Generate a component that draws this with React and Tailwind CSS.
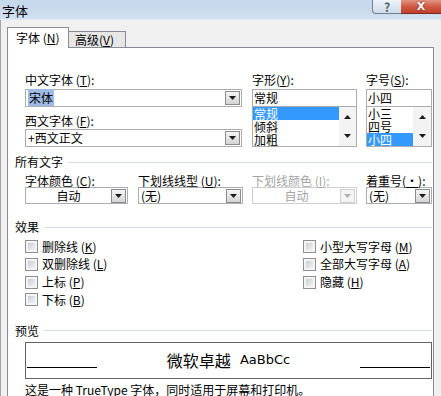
import React from 'react'

function M({ c }) {
  return (
    <>
      (<span className="underline underline-offset-1">{c}</span>)
    </>
  )
}

function Tri({ up, disabled }) {
  return (
    <svg width="7" height="4" viewBox="0 0 7 4">
      <path d={up ? 'M0 4 L3.5 0 L7 4 Z' : 'M0 0 L7 0 L3.5 4 Z'} fill={disabled ? '#b0b0b0' : '#1a1a1a'} />
    </svg>
  )
}

function Arrow({ disabled }) {
  return (
    <div
      className={`mr-px flex h-[14px] w-[15px] items-center justify-center border ${
        disabled ? 'border-[#d0d0d0] bg-[#f4f4f4]' : 'border-[#8b8b8b] bg-linear-to-b from-[#f6f6f6] to-[#d4d4d4]'
      }`}
    >
      <Tri disabled={disabled} />
    </div>
  )
}

function Combo({ className, children, center, disabled }) {
  return (
    <div
      className={`flex h-[17px] items-center border bg-white ${
        disabled ? 'border-[#cfcfcf] text-[#a3a3a3]' : 'border-[#abadb3]'
      } ${className}`}
    >
      <div className={`flex-1 whitespace-nowrap ${center ? 'text-center' : 'pl-[2px]'}`}>{children}</div>
      <Arrow disabled={disabled} />
    </div>
  )
}

function ListBox({ items, selected, sbw }) {
  return (
    <div className="flex h-[40px] border border-t-0 border-[#abadb3] bg-white">
      <div className="flex flex-1 flex-col leading-[13px]">
        {items.map((it) => (
          <div key={it} className={`h-[13px] pl-px ${it === selected ? 'bg-[#3399ff] text-white' : ''}`}>
            {it}
          </div>
        ))}
      </div>
      <div className={`flex flex-col bg-[#f3f3f3] ${sbw}`}>
        <div className="flex flex-1 items-center justify-center">
          <Tri up />
        </div>
        <div className="flex flex-1 items-center justify-center">
          <Tri />
        </div>
      </div>
    </div>
  )
}

function Check({ children }) {
  return (
    <div className="flex h-[17.67px] items-center">
      <span className="flex h-[13px] w-[13px] border border-[#8e8f8f] bg-[#f4f4f4] p-[2px]">
        <span className="flex-1 bg-linear-to-br from-[#c9ced4] to-[#f2f3f4]" />
      </span>
      <span className="ml-[4px]">{children}</span>
    </div>
  )
}

function Section({ children }) {
  return (
    <div className="-ml-[10px] flex h-[14px] items-center leading-[14px]">
      <span>{children}</span>
      <div className="ml-[5px] h-px flex-1 bg-[#d5dde5]" />
    </div>
  )
}

export default function App() {
  return (
    <div className="flex h-[396px] w-[441px] flex-col overflow-hidden bg-[#f0f0f0] font-['Noto_Sans_CJK_SC',sans-serif] text-[12px] leading-[14px] text-black">
      <div className="h-[2px] bg-[#262626]" />
      <div className="flex h-[24px] items-start justify-between border-b border-[#dfe7f0] bg-linear-to-b from-[#c6d8ec] via-[#c9daed] to-[#d3e1f0]">
        <span className="ml-[2px] mt-[3px] text-[13px] leading-[16px]">字体</span>
        <div className="flex">
          <div className="flex h-[14px] w-[29px] items-center justify-center rounded-bl-[4px] border-b border-l border-[#6f8196] bg-linear-to-b from-[#eef3f8] to-[#cfdbe8] text-[12px] font-bold leading-[14px] text-[#4f5f72]">
            ?
          </div>
          <div className="flex h-[14px] w-[40px] items-center justify-center border-b border-[#7a2a20] bg-linear-to-b from-[#e39484] via-[#cf5a45] to-[#c0402c] font-['DejaVu_Sans',sans-serif] text-[11px] font-bold leading-[14px] text-white [text-shadow:0_0_2px_#5a1a10]">
            X
          </div>
        </div>
      </div>

      <div className="flex flex-1 flex-col border-l border-[#a3a3a3] pl-[6px] pt-[6px]">
        <div className="flex h-[21px] items-end">
          <div className="relative z-10 -mb-px flex h-[21px] w-[62px] items-center border border-b-0 border-[#898c95] bg-white pl-[8px]">
            字体 <M c="N" />
          </div>
          <div className="flex h-[16px] w-[57px] items-center border border-b-0 border-l-0 border-[#898c95] bg-[#e6e6e6] pl-[6px]">
            高级<M c="V" />
          </div>
        </div>

        <div className="flex w-[427px] flex-1 flex-col border border-b-0 border-[#898c95] bg-white pl-[17px] pr-px pt-[25px]">
          <div className="flex">
            <div className="flex w-[217px] flex-col">
              <div className="h-[16px]">
                中文字体 <M c="T" />:
              </div>
              <Combo className="h-[18px]">
                <span className="bg-[#9dbbe4] px-px">宋体</span>
              </Combo>
              <div className="flex h-[22px] items-end pb-px">
                西文字体 <M c="F" />:
              </div>
              <Combo className="h-[18px]">+西文正文</Combo>
            </div>
            <div className="ml-[10px] flex w-[105px] flex-col">
              <div className="h-[16px]">
                字形<M c="Y" />:
              </div>
              <div className="flex h-[18px] items-center border border-[#abadb3] pl-px">常规</div>
              <ListBox items={['常规', '倾斜', '加粗']} selected="常规" sbw="w-[17px]" />
            </div>
            <div className="ml-[9px] flex w-[66px] flex-col">
              <div className="h-[16px]">
                字号<M c="S" />:
              </div>
              <div className="flex h-[18px] items-center border border-[#abadb3] pl-px">小四</div>
              <ListBox items={['小三', '四号', '小四']} selected="小四" sbw="w-[18px]" />
            </div>
          </div>

          <div className="mt-[8px]">
            <Section>所有文字</Section>
          </div>
          <div className="mt-[5px] flex">
            <div className="w-[103px]">
              <div className="h-[13px] leading-[13px]">
                字体颜色 <M c="C" />:
              </div>
              <Combo center>自动</Combo>
            </div>
            <div className="ml-[10px] w-[105px]">
              <div className="h-[13px] whitespace-nowrap leading-[13px]">
                下划线线型 <M c="U" />:
              </div>
              <Combo>(无)</Combo>
            </div>
            <div className="ml-[9px] w-[105px]">
              <div className="h-[13px] leading-[13px] text-[#a3a3a3]">
                下划线颜色 <M c="I" />:
              </div>
              <Combo center disabled>
                自动
              </Combo>
            </div>
            <div className="ml-[9px] w-[66px]">
              <div className="h-[13px] whitespace-nowrap leading-[13px]">
                着重号(<span className="underline">·</span>):
              </div>
              <Combo>(无)</Combo>
            </div>
          </div>

          <div className="mt-[16px]">
            <Section>效果</Section>
          </div>
          <div className="mt-[4px] flex">
            <div className="w-[278px]">
              <Check>
                删除线 <M c="K" />
              </Check>
              <Check>
                双删除线 <M c="L" />
              </Check>
              <Check>
                上标 <M c="P" />
              </Check>
              <Check>
                下标 <M c="B" />
              </Check>
            </div>
            <div>
              <Check>
                小型大写字母 <M c="M" />
              </Check>
              <Check>
                全部大写字母 <M c="A" />
              </Check>
              <Check>
                隐藏 <M c="H" />
              </Check>
            </div>
          </div>

          <div className="mt-[15px]">
            <Section>预览</Section>
          </div>
          <div className="mt-[4px] flex h-[37px] items-center border border-[#646464] px-px">
            <div className="mt-[14px] h-px w-[70px] bg-black" />
            <div className="flex flex-1 items-center justify-center">
              <span className="text-[16px] leading-[18px]">微软卓越</span>
              <span className="ml-[9px] font-['DejaVu_Sans',sans-serif] text-[13px] leading-[16px]">AaBbCc</span>
            </div>
            <div className="mt-[14px] h-px w-[70px] bg-black" />
          </div>
          <div className="mt-[4px] whitespace-nowrap">这是一种 TrueType 字体，同时适用于屏幕和打印机。</div>
        </div>
      </div>
    </div>
  )
}
